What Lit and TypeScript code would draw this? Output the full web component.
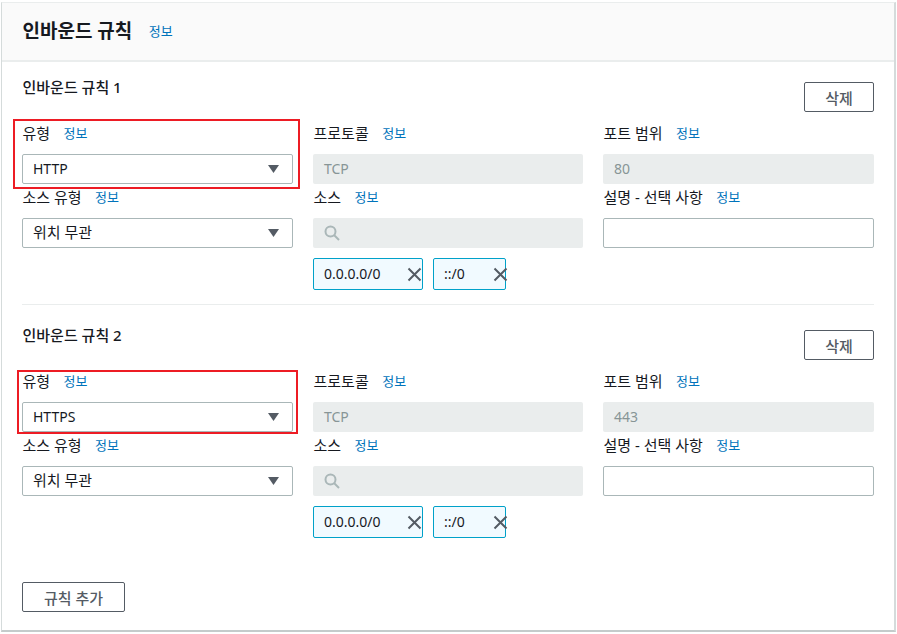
import { LitElement, html, css } from "lit";
import { customElement } from "lit/decorators.js";

const caret = html`<svg class="caret" width="11" height="8" viewBox="0 0 11 8"><path d="M0 0h11L5.5 8z" fill="#545b64"/></svg>`;
const search = html`<svg class="search" width="16" height="16" viewBox="0 0 16 16" fill="none" stroke="#aab7b8" stroke-width="2"><circle cx="6.5" cy="6.5" r="5"/><path d="M10 10l5 5"/></svg>`;
const x = html`<svg class="x" width="15" height="15" viewBox="0 0 15 15" fill="none" stroke="#545b64" stroke-width="2"><path d="M1.5 1.5l12 12M13.5 1.5l-12 12"/></svg>`;

const info = html`<a class="info">정보</a>`;

@customElement("app-root")
export class AppRoot extends LitElement {
  static styles = css`
    :host { display: block; width: 897px; height: 634px; background: #fff; font-family: "Noto Sans", "Noto Sans CJK KR", sans-serif; font-size: 15px; color: #16191f; overflow: hidden; box-sizing: border-box; padding: 2px 1px; }
    * { box-sizing: border-box; }
    .card { height: 630px; width: 895px; border: 1px solid #eaeded; border-left: 1px solid #d5dbdb; border-right: 2px solid #d5dbdb; border-bottom: 2px solid #c4cbcb; background: #fff; }
    .head { height: 59px; background: #fafafa; border-bottom: 2px solid #eaeded; display: flex; align-items: center; padding: 0 0 2px 20.5px; }
    .head h2 { margin: 0; font-size: 19px; font-weight: 700; line-height: 24px; }
    .head .info { margin-left: 16.5px; }
    .info { color: #0073bb; font-size: 13px; line-height: 16px; }
    .body { padding: 0 20px; }
    .rule { padding-top: 20px; position: relative; }
    .rule.first { height: 242px; }
    .rule + .rule { border-top: 1px solid #eaeded; padding-top: 25px; height: 278px; }
    .top { display: flex; justify-content: space-between; align-items: flex-start; height: 36px; }
    .top h3 { margin: 0 0 0 0.5px; font-size: 15px; font-weight: 500; line-height: 10px; }
    .btn { flex: none; width: 70px; height: 30px; border: 1px solid #545b64; border-radius: 2px; background: #fff; color: #545b64; font: inherit; font-size: 15px; font-weight: 500; display: flex; align-items: center; justify-content: center; padding: 0; }
    .grid { display: grid; grid-template-columns: 271px 270px 271px; column-gap: 20px; grid-auto-rows: 64px; }
    .field { position: relative; display: flex; flex-direction: column; }
    .lab { flex: none; height: 36px; display: flex; align-items: flex-start; gap: 13.5px; line-height: 30px; padding-left: 0.5px; }
    .lab .info { line-height: 30px; }
    .ctl { flex: none; height: 30px; border-radius: 2px; display: flex; align-items: center; padding: 0 11px; }
    .sel { border: 1px solid #aab7b8; justify-content: space-between; padding: 0 13px 0 10px; background: #fff; }
    .off { background: #eaeded; color: #879596; font-size: 14px; }
    .inp { border: 1px solid #aab7b8; background: #fff; }
    .latin { font-size: 14px; margin-bottom: 2px; }
    .ko { margin-bottom: 4px; }
    .search { display: block; }
    .tokens { flex: none; display: flex; gap: 10px; margin-top: 10px; }
    .token { position: relative; height: 32px; border: 1px solid #00a1c9; border-radius: 2px; background: #f1faff; display: flex; align-items: center; padding: 0 10px 2px; font-size: 14px; }
    .token .x { position: absolute; right: 0; top: 8px; }
    .t1 { width: 110px; }
    .t2 { width: 73px; }
    .t2 .x { right: -3px; }
    .mark { position: absolute; border: 2px solid #ed1c24; pointer-events: none; }
    .m1 { left: -9px; top: 1px; width: 287px; height: 70px; }
    .m2 { left: -5px; top: 4px; width: 281px; height: 64px; }
    .add { width: 103px; }
  `;

  rule(n: number, type: string, port: string) {
    return html`
      <section class="rule ${n === 1 ? "first" : ""}">
        <div class="top">
          <h3>인바운드 규칙 ${n}</h3>
          <button class="btn">삭제</button>
        </div>
        <div class="grid">
          <div class="field">
            <div class="lab"><span>유형</span>${info}</div>
            <div class="ctl sel"><span class="latin">${type}</span>${caret}</div>
            <div class="mark ${n === 1 ? "m1" : "m2"}"></div>
          </div>
          <div class="field">
            <div class="lab"><span>프로토콜</span>${info}</div>
            <div class="ctl off"><span class="latin">TCP</span></div>
          </div>
          <div class="field">
            <div class="lab"><span>포트 범위</span>${info}</div>
            <div class="ctl off"><span class="latin">${port}</span></div>
          </div>
          <div class="field">
            <div class="lab"><span>소스 유형</span>${info}</div>
            <div class="ctl sel"><span class="ko">위치 무관</span>${caret}</div>
          </div>
          <div class="field">
            <div class="lab"><span>소스</span>${info}</div>
            <div class="ctl off">${search}</div>
            <div class="tokens">
              <div class="token t1">0.0.0.0/0${x}</div>
              <div class="token t2">::/0${x}</div>
            </div>
          </div>
          <div class="field">
            <div class="lab"><span>설명 - 선택 사항</span>${info}</div>
            <div class="ctl inp"></div>
          </div>
        </div>
      </section>
    `;
  }

  render() {
    return html`
      <div class="card">
        <div class="head"><h2>인바운드 규칙</h2><a class="info">정보</a></div>
        <div class="body">
          ${this.rule(1, "HTTP", "80")}
          ${this.rule(2, "HTTPS", "443")}
          <button class="btn add">규칙 추가</button>
        </div>
      </div>
    `;
  }
}
